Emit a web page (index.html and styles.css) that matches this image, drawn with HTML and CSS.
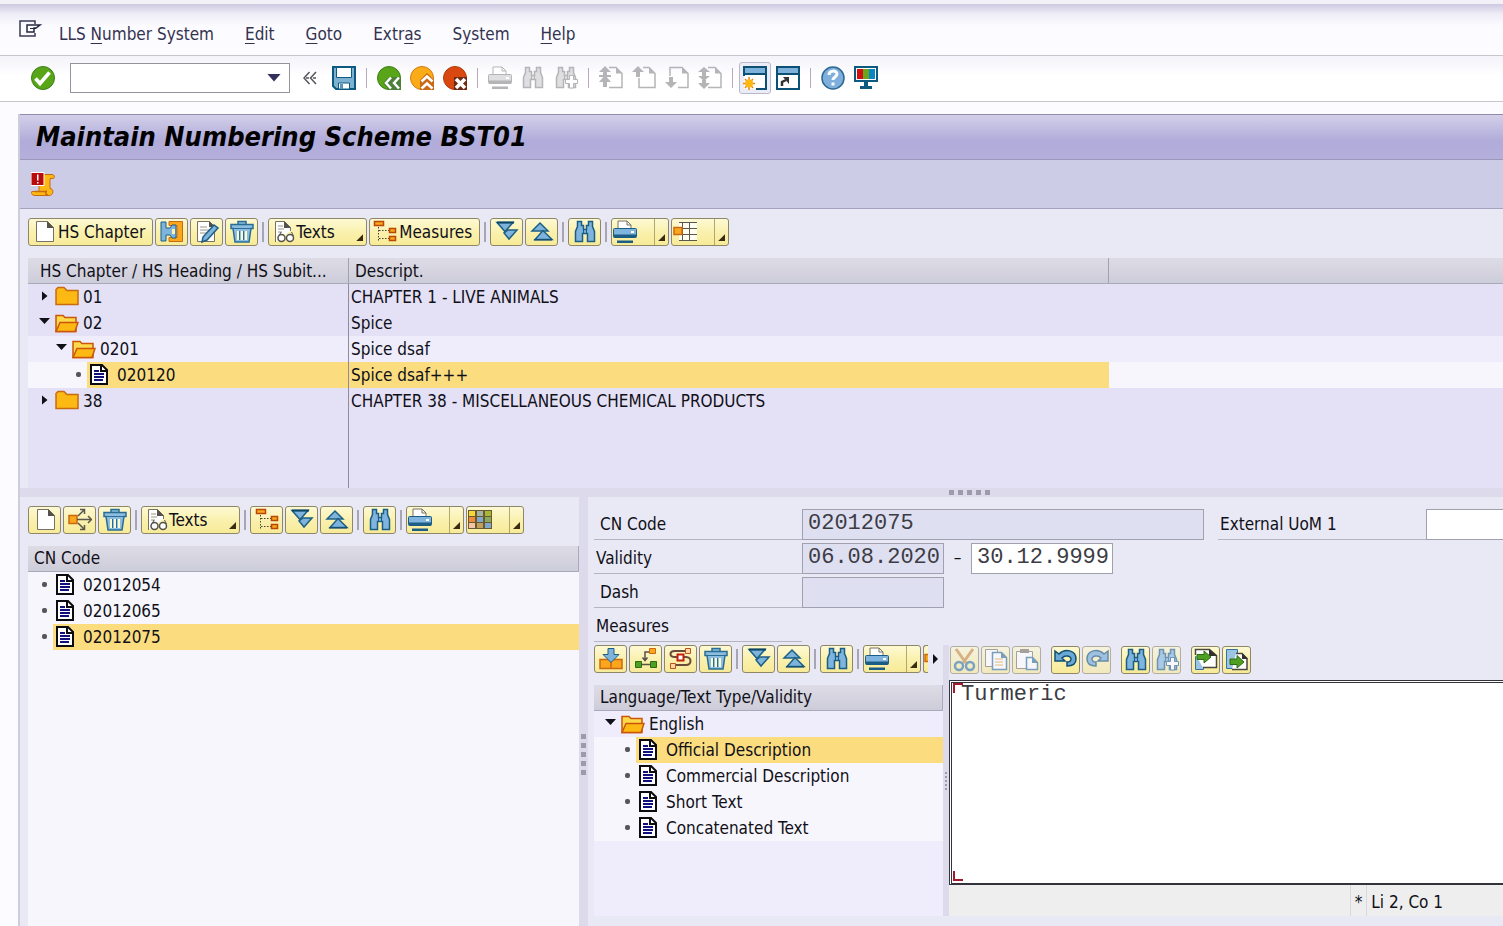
FILE: index.html
```html
<!DOCTYPE html>
<html lang="en">
<head>
    <meta charset="UTF-8">
    <meta name="viewport" content="width=device-width, initial-scale=1.0">
    <title>Maintain Numbering Scheme BST01</title>
    <link rel="stylesheet" href="styles.css">
</head>
<body>

    <!-- Icon sprite -->
    <svg class="sprite" aria-hidden="true">
        <symbol id="i-menu" viewBox="0 0 24 18">
            <path d="M16 4V1H1v15h15v-3" fill="none" stroke="#3a3a55" stroke-width="1.5"/>
            <path d="M8 5h13l-4 3h-2v4H8z" fill="#fff" stroke="#25253f" stroke-width="1.500"/>
            <path d="M11 8.500h6" stroke="#25253f"/>
        </symbol>
        <symbol id="i-ok" viewBox="0 0 24 24">
            <circle cx="12" cy="12" r="11.5" fill="#58a618" stroke="#3c7d1a"/>
            <path d="M4.500 12.500l4.500 5L18.500 6.500" fill="none" stroke="#fff" stroke-width="3.600"/>
        </symbol>
        <symbol id="i-hide" viewBox="0 0 14 14">
            <path d="M6.500 1L1 7l5.500 6M13 1L7.500 7l5.500 6M3 7h3M10 7h3" fill="none" stroke="#55555c" stroke-width="1.500"/>
        </symbol>
        <symbol id="i-save" viewBox="0 0 24 24">
            <path d="M1 1h22v22H4l-3-3z" fill="#7eb0d2" stroke="#0d5a80" stroke-width="2"/>
            <path d="M4.500 1.500h15v10h-15z" fill="#fff" stroke="#0d5a80"/>
            <path d="M6.500 17h11v6h-11z" fill="#fff" stroke="#0d5a80"/>
            <path d="M8 18h3v5H8z" fill="#5c93b8"/>
        </symbol>
        <symbol id="i-back" viewBox="0 0 24 24">
            <circle cx="12" cy="12" r="11.500" fill="#58a618" stroke="#3c7d1a"/>
            <path d="M6 17l6-6h12v13H12z" fill="#4b7f3b"/>
            <path d="M14 11.500l-5 5.500 5 5.500M22 11.500l-5 5.500 5 5.500" fill="none" stroke="#fff" stroke-width="2.500"/>
        </symbol>
        <symbol id="i-exit" viewBox="0 0 24 24">
            <circle cx="12" cy="12" r="11.500" fill="#fbab18" stroke="#d47a10"/>
            <path d="M10 14l7-7 7 7v10H10z" fill="#c96a14"/>
            <path d="M11.500 15.500l5.500-5 5.500 5M11.500 22.500l5.500-5 5.500 5" fill="none" stroke="#fff" stroke-width="2.600"/>
        </symbol>
        <symbol id="i-cancel" viewBox="0 0 24 24">
            <circle cx="12" cy="12" r="11.500" fill="#d9490f" stroke="#b23a0d"/>
            <path d="M11 11h13v13H11z" fill="#6f2a14"/>
            <path d="M13 13l9 9M22 13l-9 9" stroke="#fff" stroke-width="3.600"/>
        </symbol>
        <symbol id="i-print" viewBox="0 0 24 24">
            <path d="M5 9V1h9l4 4v4" fill="#fff" stroke="var(--dim)"/>
            <path d="M14 1v4h4" fill="none" stroke="var(--dim)"/>
            <rect x=".5" y="8.500" width="23" height="9" rx="1" fill="var(--fill)" stroke="var(--line)"/>
            <path d="M1 14.500h22v3H1zM4 20.500h16v2.500H4z" fill="var(--line)"/>
            <path d="M18 11h3v2h-3z" fill="#fff"/>
        </symbol>
        <symbol id="i-find" viewBox="0 0 24 24">
            <path d="M4.500 1.500h4v4h2v4h3v-4h2v-4h4v5l2 5v10h-7v-8h-5v8h-7v-10l2-5z" fill="var(--fill)" stroke="var(--line)" stroke-width="1.500"/>
            <path d="M10.500 6v8M13.500 6v8" stroke="var(--line)"/>
        </symbol>
        <symbol id="i-find-next" viewBox="0 0 24 24">
            <use href="#i-find"/>
            <path d="M15.500 9.500h4v4h4v4h-4v4.500h-4v-4.500h-4v-4h4z" fill="#fff" stroke="var(--line)"/>
        </symbol>
        <symbol id="i-page" viewBox="0 0 24 24">
            <path d="M10 1.500h7l6 6v14H10" fill="none" stroke="var(--line)" stroke-width="1.500"/>
            <path d="M17 1l6 6.500h-6z" fill="var(--line)"/>
        </symbol>
        <symbol id="i-first" viewBox="0 0 24 24">
            <use href="#i-page"/>
            <path d="M6 0l6 6H8v3h4v2H0V9h4V6H0zM6 9l6 7H8v5H4v-5H0z" fill="var(--line)"/>
        </symbol>
        <symbol id="i-prev" viewBox="0 0 24 24">
            <path d="M7 12v9.500h16v-14l-6-6h-6" fill="none" stroke="var(--line)" stroke-width="1.500"/>
            <path d="M17 1l6 6.500h-6zM6 0l6 6H8v5H4V6H0z" fill="var(--line)"/>
        </symbol>
        <symbol id="i-next" viewBox="0 0 24 24">
            <path d="M5 10V1.500h12l6 6v14H13" fill="none" stroke="var(--line)" stroke-width="1.500"/>
            <path d="M17 1l6 6.500h-6zM4 11h4v5h4l-6 6-6-6h4z" fill="var(--line)"/>
        </symbol>
        <symbol id="i-last" viewBox="0 0 24 24">
            <use href="#i-page"/>
            <path d="M6 1l6 5H8v4h4l-6 5-6-5h4V6H0zM4 14h4v3h4l-6 6-6-6h4z" fill="var(--line)"/>
        </symbol>
        <symbol id="i-session" viewBox="0 0 24 24">
            <path d="M1 7h22v16H1z" fill="#fff"/>
            <path d="M1 10V1h22v22H13" fill="none" stroke="#0d5076" stroke-width="2"/>
            <path d="M2 2h20v5H2z" fill="#7fb2db"/><path d="M1 8h22" stroke="#0d5076" stroke-width="2"/>
            <path d="M6 11v13M0 17.500h12M2 13l8 9M10 13l-8 9" stroke="#e8860c" stroke-width="1.500"/>
            <circle cx="6" cy="17.500" r="4" fill="#fdb813"/>
        </symbol>
        <symbol id="i-shortcut" viewBox="0 0 24 24">
            <path d="M1 1h22v22H1z" fill="#fff" stroke="#0d5076" stroke-width="2"/>
            <path d="M2 2h20v5H2z" fill="#7fb2db"/><path d="M1 8h22" stroke="#0d5076" stroke-width="2"/>
            <path d="M6 20v-4l4-2" fill="none" stroke="#333" stroke-width="2.500"/><path d="M7 11h6v7z" fill="#333"/>
        </symbol>
        <symbol id="i-help" viewBox="0 0 24 24">
            <circle cx="12" cy="12" r="11" fill="#7fb0dc" stroke="#2d6793" stroke-width="1.500"/>
            <path d="M8 9c0-5 8-5 8-1 0 3-4 3-4 6" fill="none" stroke="#fff" stroke-width="3"/>
            <path d="M10.500 16.500h3v3h-3z" fill="#fff"/>
        </symbol>
        <symbol id="i-monitor" viewBox="0 0 24 24">
            <path d="M1 1h22v14H1z" fill="#fff" stroke="#0d5a80" stroke-width="2"/>
            <path d="M3 3h6v10H3z" fill="#d01010"/><path d="M9 3h6v10H9z" fill="#6aa51c"/><path d="M15 3h6v10h-6z" fill="#0b86c4"/>
            <path d="M10 16h4v4h4v3H6v-3h4z" fill="#0d5a80"/>
        </symbol>
        <symbol id="i-scroll" viewBox="0 0 24 24">
            <path d="M8 2.500h13c3 0 3 4 1 4h-3v10c4 0 4 7-1 7H4c-4 0-4-4-3-4h7z" fill="#fdb813" stroke="#c96a10"/>
            <path d="M4 19.500h12M17 23c-3 0-3-4-1-4" fill="none" stroke="#c96a10" stroke-width="1.500"/>
            <path d="M0 .5h13v13H0z" fill="#b80c0c" stroke="#fff"/>
            <path d="M6 2.500h1.500v6H6zM6 10h1.500v1.500H6z" fill="#fff"/>
        </symbol>
        <symbol id="i-new" viewBox="0 0 24 24">
            <path d="M4.500 1.500h11l6 6v14h-17z" fill="#fff" stroke="#777164"/>
            <path d="M15 1l7 7h-7z" fill="#55524b"/>
        </symbol>
        <symbol id="i-insert" viewBox="0 0 24 24">
            <path d="M9 1.500h13.500v20H9v-4h8v-12H9z" fill="#fba61c" stroke="#c96a10"/>
            <path d="M1 2h5v6h4l2-3h4v13h-4l-2-3H6v6H1z" fill="#7eb3dc" stroke="#1d5f85"/>
            <path d="M12 9h3v5h-3z" fill="#fdf3b0"/>
        </symbol>
        <symbol id="i-edit" viewBox="0 0 24 24">
            <path d="M2.500 1.500h12l5 5v15h-17z" fill="#fff" stroke="#777164"/>
            <path d="M14 1l6 6h-6z" fill="#55524b"/>
            <path d="M5 7h7M5 10h9M5 13h6" stroke="#9a9688"/>
            <path d="M7 22l1-5L19 5l4 3-11 12z" fill="#7eb3dc" stroke="#1d5f85" stroke-width="1.500"/>
        </symbol>
        <symbol id="i-trash" viewBox="0 0 24 24">
            <path d="M8 4V1.500h8V4M1 4.500h22v4h-2L19 22H5L3 8.500H1z" fill="#8dbde0" stroke="#2a6d93" stroke-width="1.500"/>
            <path d="M2 8.500h20" stroke="#2a6d93"/>
            <path d="M8 11v9M12 11v9M16 11v9" stroke="#fdf9d0" stroke-width="2"/>
            <path d="M9.500 11v9M13.500 11v9" stroke="#2a6d93"/>
        </symbol>
        <symbol id="i-texts" viewBox="0 0 24 24">
            <path d="M3.500 22V1.500h9l6 6V11" fill="#fff" stroke="#777164"/>
            <path d="M12 1l7 7h-7z" fill="#55524b"/>
            <path d="M6 6h5M6 9h6M6 12h4" stroke="#9a9688"/>
            <path d="M7 16l2-4M21.500 16l-2-4" stroke="#55524b"/>
            <circle cx="9.500" cy="18" r="3.500" fill="#fff" stroke="#55524b" stroke-width="1.500"/>
            <circle cx="18" cy="18" r="3.500" fill="#fff" stroke="#55524b" stroke-width="1.500"/>
        </symbol>
        <symbol id="i-tree" viewBox="0 0 24 24">
            <path d="M5.500 7v15M6 10.500h10M6 18.500h10" stroke="#4c4230" stroke-dasharray="1.500 1.500" fill="none"/>
            <path d="M1.500 1.500h9v4h-9zM16.500 8.500h6v4h-6zM16.500 16.500h6v4h-6z" fill="#fba61c" stroke="#b9470a" stroke-width="1.500"/>
        </symbol>
        <symbol id="i-expand" viewBox="0 0 24 24">
            <path d="M13 10h9l-8 9-5-6z" fill="#7eb3dc" stroke="#1d5f85" stroke-width="1.500"/>
            <path d="M2 2.500h16l-8 9z" fill="#7eb3dc" stroke="#1d5f85" stroke-width="1.500"/>
            <path d="M2 2.500h17" stroke="#0d4566" stroke-width="2"/>
        </symbol>
        <symbol id="i-collapse" viewBox="0 0 24 24">
            <path d="M2 11l8-8 8 8z" fill="#7eb3dc" stroke="#1d5f85" stroke-width="1.500"/>
            <path d="M5 19.500l8-9 9 9z" fill="#7eb3dc" stroke="#1d5f85" stroke-width="1.500"/>
            <path d="M4 20h18" stroke="#0d4566"/>
        </symbol>
        <symbol id="i-grid" viewBox="0 0 24 24">
            <path d="M6 2h18v19H6z" fill="#fffdf0"/>
            <path d="M6 2.500h18M6 8.500h18M6 14.500h18M6 20.500h18M9.500 2v19M16.500 2v19" stroke="#5a574e" fill="none"/>
            <path d="M1 7.500h8v7H1z" fill="#fba61c" stroke="#c96a10" stroke-width="1.500"/>
        </symbol>
        <symbol id="i-colors" viewBox="0 0 24 24">
            <path d="M0 2h24v19H0z" fill="#6a5a2c"/>
            <path d="M1 3h6v5H1z" fill="#f5d63d"/><path d="M9 3h6v5H9z" fill="#a3b3a8"/><path d="M17 3h6v5h-6z" fill="#a8b73a"/>
            <path d="M1 9h6v5H1z" fill="#f08a3c"/><path d="M9 9h6v5H9z" fill="#7fa8d0"/><path d="M17 9h6v5h-6z" fill="#89a860"/>
            <path d="M1 15h6v5H1z" fill="#f5c4a8"/><path d="M9 15h6v5H9z" fill="#c0a060"/><path d="M17 15h6v5h-6z" fill="#7fa8d0"/>
        </symbol>
        <symbol id="i-spread" viewBox="0 0 24 24">
            <path d="M1 7.500h8v8H1z" fill="#fba61c" stroke="#c96a10" stroke-width="1.500"/>
            <path d="M9 11.500h14M20 8l3.500 3.500L20 15M10 8l6-6M12 1.500h4.500V6M10 15l6 6M12 21.500h4.500V17" fill="none" stroke="#5a574e" stroke-width="1.500"/>
        </symbol>
        <symbol id="i-load" viewBox="0 0 24 24">
            <path d="M1 12.500h22v9H1zM12 12v9" fill="#fba61c" stroke="#c96a10" stroke-width="1.500"/>
            <path d="M9 1.500h6v6h5l-8 8-8-8h5z" fill="#7eb3dc" stroke="#1d5f85"/>
        </symbol>
        <symbol id="i-branch" viewBox="0 0 24 24">
            <path d="M15 5h-4v8M8.500 10.500l2.500 3 2.500-3M8 17.500h8" fill="none" stroke="#55524b" stroke-width="1.500"/>
            <path d="M15.500 1.500h6v5h-6z" fill="#fba61c" stroke="#c96a10"/>
            <path d="M1.500 14.500h6v6h-6zM16.500 14.500h6v6h-6z" fill="#4da022" stroke="#2f6a14"/>
        </symbol>
        <symbol id="i-flow" viewBox="0 0 24 24">
            <path d="M17 4H6c-6 0-6 6 0 6h11c6 0 6 8 0 8H7" fill="none" stroke="#6a4a3a" stroke-width="2"/>
            <path d="M8.500 7.500h6v6h-6z" fill="#fff" stroke="#c0200c" stroke-width="2"/>
            <path d="M16.500 1.500h5v5h-5zM1.500 16.500h5v5h-5z" fill="#fdd8a0" stroke="#c0501c"/>
        </symbol>
        <symbol id="i-cut" viewBox="0 0 24 24">
            <path d="M3 1l10 14M20 1L10 15" stroke="#c98d3c" stroke-width="3"/>
            <circle cx="6" cy="18" r="4" fill="none" stroke="#33749f" stroke-width="2.500"/>
            <circle cx="17" cy="18" r="4" fill="none" stroke="#33749f" stroke-width="2.500"/>
        </symbol>
        <symbol id="i-copy" viewBox="0 0 24 24">
            <path d="M1.500 1.500h12v17h-12z" fill="#fff" stroke="#777164"/>
            <path d="M8.500 4.500h9l5 5v12h-14z" fill="#fff" stroke="#2f6d95" stroke-width="1.500"/>
            <path d="M17 4l6 6h-6z" fill="#2f6d95"/><path d="M11 11h8M11 14h8M11 17h8" stroke="#e0a030"/>
        </symbol>
        <symbol id="i-paste" viewBox="0 0 24 24">
            <path d="M1.500 3.500h16v17h-16z" fill="#fff" stroke="#777164"/><path d="M5 1h9v4H5z" fill="#777164"/>
            <path d="M11.500 9.500h6l5 5v7h-11z" fill="#fff" stroke="#2f6d95" stroke-width="1.500"/>
            <path d="M17 9l6 6h-6z" fill="#2f6d95"/>
        </symbol>
        <symbol id="i-undo" viewBox="0 0 24 24">
            <path d="M1 3l4 3c6-6 17-4 17 5 0 5-4 7-9 7v-4c6 0 5-7-1-6-2 0-3 1-4 2l3 3H1z" fill="#6ba8d6" stroke="#114f74" stroke-width="1.500"/>
        </symbol>
        <symbol id="i-import" viewBox="0 0 24 24">
            <path d="M1.500 8.500h8v13h-8z" fill="#9cc4e4" stroke="#33749f"/>
            <path d="M1.500 7V1.500h14l7 6v12H9" fill="#fff" stroke="#4a473e" stroke-width="1.500"/><path d="M15 1l8 7h-8z" fill="#33312b"/>
            <path d="M3 6.500h7V3l7 6-7 6v-3.500H3z" fill="#4da022" stroke="#2f6a14"/>
        </symbol>
        <symbol id="i-export" viewBox="0 0 24 24">
            <path d="M1.500 1.500h11v19h-11z" fill="#9cc4e4" stroke="#33749f"/>
            <path d="M11 5.500h6l5 5v11H7" fill="#fff" stroke="#4a473e" stroke-width="1.500"/><path d="M17 5l6 6h-6z" fill="#33312b"/>
            <path d="M5 11h7V7.500l7 6.500-7 6v-3.500H5z" fill="#4da022" stroke="#2f6a14"/>
        </symbol>
        <symbol id="i-folder" viewBox="0 0 24 24">
            <path d="M1 19.500V4.500l2-2h6l3 3h11v14z" fill="#fdb913" stroke="#c96a10" stroke-width="1.500"/>
        </symbol>
        <symbol id="i-folder-open" viewBox="0 0 24 24">
            <path d="M1 20.500V4.500h7l2 2h11v14z" fill="#fdd94c" stroke="#c9560a" stroke-width="1.500"/>
            <path d="M1 20.500l4-9h18l-3 9z" fill="#fdb913" stroke="#c9560a" stroke-width="1.500"/>
        </symbol>
        <symbol id="i-doc" viewBox="0 0 24 24">
            <path d="M2 2h11l5 5v14H2z" fill="#fff" stroke="#0c0c10" stroke-width="2"/>
            <path d="M12 2v6h6" fill="none" stroke="#0c0c10" stroke-width="2"/>
            <path d="M5 8h5M5 11h10M5 14h10M5 17h9" stroke="#10107c" stroke-width="2"/>
        </symbol>
    </svg>

    <nav class="menubar">
        <button class="menu-icon" aria-label="Window menu"><svg width="24" height="18"><use href="#i-menu"/></svg></button>
        <button>LLS <u>N</u>umber System</button>
        <button><u>E</u>dit</button>
        <button><u>G</u>oto</button>
        <button>Extr<u>a</u>s</button>
        <button>S<u>y</u>stem</button>
        <button><u>H</u>elp</button>
    </nav>

    <div class="std-toolbar">
        <button aria-label="Enter"><svg class="icon"><use href="#i-ok"/></svg></button>
        <div class="command">
            <input type="text" aria-label="Command">
            <button aria-label="Command history"></button>
        </div>
        <button class="chevrons" aria-label="Hide command field"><svg width="14" height="14"><use href="#i-hide"/></svg></button>
        <button aria-label="Save"><svg class="icon"><use href="#i-save"/></svg></button>
        <span class="line"></span>
        <button aria-label="Back"><svg class="icon"><use href="#i-back"/></svg></button>
        <button aria-label="Exit"><svg class="icon"><use href="#i-exit"/></svg></button>
        <button aria-label="Cancel"><svg class="icon"><use href="#i-cancel"/></svg></button>
        <span class="line"></span>
        <button disabled aria-label="Print"><svg class="icon"><use href="#i-print"/></svg></button>
        <button disabled aria-label="Find"><svg class="icon"><use href="#i-find"/></svg></button>
        <button disabled aria-label="Find next"><svg class="icon"><use href="#i-find-next"/></svg></button>
        <span class="line"></span>
        <button disabled aria-label="First page"><svg class="icon"><use href="#i-first"/></svg></button>
        <button disabled aria-label="Previous page"><svg class="icon"><use href="#i-prev"/></svg></button>
        <button disabled aria-label="Next page"><svg class="icon"><use href="#i-next"/></svg></button>
        <button disabled aria-label="Last page"><svg class="icon"><use href="#i-last"/></svg></button>
        <span class="line"></span>
        <button class="active" aria-label="New session"><svg class="icon"><use href="#i-session"/></svg></button>
        <button aria-label="Create shortcut"><svg class="icon"><use href="#i-shortcut"/></svg></button>
        <span class="line"></span>
        <button aria-label="Help"><svg class="icon"><use href="#i-help"/></svg></button>
        <button aria-label="Customize layout"><svg class="icon"><use href="#i-monitor"/></svg></button>
    </div>

    <main class="window">
        <h1 class="title">Maintain Numbering Scheme BST01</h1>
        <div class="app-toolbar">
            <button aria-label="Information"><svg class="icon"><use href="#i-scroll"/></svg></button>
        </div>

        <section class="top-pane">
            <div class="toolbar">
                <button class="btn text"><svg class="icon"><use href="#i-new"/></svg><span>HS Chapter</span></button>
                <button class="btn" aria-label="Insert"><svg class="icon"><use href="#i-insert"/></svg></button>
                <button class="btn" aria-label="Edit"><svg class="icon"><use href="#i-edit"/></svg></button>
                <button class="btn" aria-label="Delete"><svg class="icon"><use href="#i-trash"/></svg></button>
                <span class="sep"></span>
                <button class="btn text drop"><svg class="icon"><use href="#i-texts"/></svg><span>Texts</span></button>
                <button class="btn text"><svg class="icon"><use href="#i-tree"/></svg><span>Measures</span></button>
                <span class="sep"></span>
                <button class="btn" aria-label="Expand"><svg class="icon"><use href="#i-expand"/></svg></button>
                <button class="btn" aria-label="Collapse"><svg class="icon"><use href="#i-collapse"/></svg></button>
                <span class="sep"></span>
                <button class="btn" aria-label="Find"><svg class="icon"><use href="#i-find"/></svg></button>
                <span class="sep"></span>
                <button class="btn drop split" aria-label="Print"><svg class="icon"><use href="#i-print"/></svg></button>
                <button class="btn drop split" aria-label="Layout"><svg class="icon"><use href="#i-grid"/></svg></button>
            </div>

            <table class="grid">
                <colgroup><col class="col-tree"><col class="col-text"><col></colgroup>
                <thead>
                    <tr><th>HS Chapter / HS Heading / HS Subit...</th><th>Descript.</th><th></th></tr>
                </thead>
                <tbody>
                    <tr>
                        <td><div class="node"><span class="mark closed"></span><span class="item"><svg class="icon"><use href="#i-folder"/></svg>01</span></div></td>
                        <td>CHAPTER 1 - LIVE ANIMALS</td><td></td>
                    </tr>
                    <tr>
                        <td><div class="node"><span class="mark open"></span><span class="item"><svg class="icon"><use href="#i-folder-open"/></svg>02</span></div></td>
                        <td>Spice</td><td></td>
                    </tr>
                    <tr class="level-1">
                        <td><div class="node"><span class="mark open"></span><span class="item"><svg class="icon"><use href="#i-folder-open"/></svg>0201</span></div></td>
                        <td>Spice dsaf</td><td></td>
                    </tr>
                    <tr class="level-2 selected">
                        <td><div class="node"><span class="mark leaf"></span><span class="item"><svg class="icon"><use href="#i-doc"/></svg>020120</span></div></td>
                        <td>Spice dsaf+++</td><td></td>
                    </tr>
                    <tr>
                        <td><div class="node"><span class="mark closed"></span><span class="item"><svg class="icon"><use href="#i-folder"/></svg>38</span></div></td>
                        <td>CHAPTER 38 - MISCELLANEOUS CHEMICAL PRODUCTS</td><td></td>
                    </tr>
                    <tr class="filler"><td></td><td></td><td></td></tr>
                </tbody>
            </table>
        </section>

        <div class="splitter-h"><i></i><i></i><i></i><i></i><i></i></div>

        <div class="bottom">
            <section class="codes">
                <div class="toolbar">
                    <button class="btn" aria-label="Create"><svg class="icon"><use href="#i-new"/></svg></button>
                    <button class="btn" aria-label="Distribute"><svg class="icon"><use href="#i-spread"/></svg></button>
                    <button class="btn" aria-label="Delete"><svg class="icon"><use href="#i-trash"/></svg></button>
                    <span class="sep"></span>
                    <button class="btn text drop"><svg class="icon"><use href="#i-texts"/></svg><span>Texts</span></button>
                    <span class="sep"></span>
                    <button class="btn" aria-label="Measures"><svg class="icon"><use href="#i-tree"/></svg></button>
                    <button class="btn" aria-label="Expand"><svg class="icon"><use href="#i-expand"/></svg></button>
                    <button class="btn" aria-label="Collapse"><svg class="icon"><use href="#i-collapse"/></svg></button>
                    <span class="sep"></span>
                    <button class="btn" aria-label="Find"><svg class="icon"><use href="#i-find"/></svg></button>
                    <span class="sep"></span>
                    <button class="btn drop split" aria-label="Print"><svg class="icon"><use href="#i-print"/></svg></button>
                    <button class="btn drop split" aria-label="Views"><svg class="icon"><use href="#i-colors"/></svg></button>
                </div>
                <h2 class="head">CN Code</h2>
                <ul class="tree">
                    <li class="node"><span class="mark leaf"></span><span class="item"><svg class="icon"><use href="#i-doc"/></svg>02012054</span></li>
                    <li class="node"><span class="mark leaf"></span><span class="item"><svg class="icon"><use href="#i-doc"/></svg>02012065</span></li>
                    <li class="node selected"><span class="mark leaf"></span><span class="item"><svg class="icon"><use href="#i-doc"/></svg>02012075</span></li>
                </ul>
            </section>

            <div class="splitter-v"><i></i><i></i><i></i><i></i><i></i></div>

            <section class="detail">
                <form class="fields">
                    <div class="row">
                        <label class="inset" for="cn-code">CN Code</label>
                        <input class="long" id="cn-code" type="text" value="02012075" readonly>
                        <label class="inset uom" for="uom">External UoM 1</label>
                        <input class="rest" id="uom" type="text">
                    </div>
                    <div class="row">
                        <label for="valid-from">Validity</label>
                        <input class="date" id="valid-from" type="text" value="06.08.2020" readonly>
                        <span class="dash">–</span>
                        <input class="date" type="text" value="30.12.9999" aria-label="Valid to">
                    </div>
                    <div class="row">
                        <label class="inset" for="dash">Dash</label>
                        <input class="date" id="dash" type="text" readonly>
                    </div>
                    <div class="row"><span class="caption">Measures</span></div>
                </form>

                <div class="texts">
                    <div class="languages">
                        <div class="toolbar">
                            <button class="btn" aria-label="Load"><svg class="icon"><use href="#i-load"/></svg></button>
                            <button class="btn" aria-label="Branch"><svg class="icon"><use href="#i-branch"/></svg></button>
                            <button class="btn" aria-label="Flow"><svg class="icon"><use href="#i-flow"/></svg></button>
                            <button class="btn" aria-label="Delete"><svg class="icon"><use href="#i-trash"/></svg></button>
                            <span class="sep"></span>
                            <button class="btn" aria-label="Expand"><svg class="icon"><use href="#i-expand"/></svg></button>
                            <button class="btn" aria-label="Collapse"><svg class="icon"><use href="#i-collapse"/></svg></button>
                            <span class="sep"></span>
                            <button class="btn" aria-label="Find"><svg class="icon"><use href="#i-find"/></svg></button>
                            <span class="sep"></span>
                            <button class="btn drop split" aria-label="Print"><svg class="icon"><use href="#i-print"/></svg></button>
                            <button class="btn clipped" aria-label="Layout"><svg class="icon"><use href="#i-grid"/></svg></button>
                            <button class="more" aria-label="More"></button>
                        </div>
                        <h2 class="head">Language/Text Type/Validity</h2>
                        <ul class="tree">
                            <li class="node"><span class="mark open"></span><span class="item"><svg class="icon"><use href="#i-folder-open"/></svg>English</span></li>
                            <li class="node level-1 selected"><span class="mark leaf"></span><span class="item"><svg class="icon"><use href="#i-doc"/></svg>Official Description</span></li>
                            <li class="node level-1"><span class="mark leaf"></span><span class="item"><svg class="icon"><use href="#i-doc"/></svg>Commercial Description</span></li>
                            <li class="node level-1"><span class="mark leaf"></span><span class="item"><svg class="icon"><use href="#i-doc"/></svg>Short Text</span></li>
                            <li class="node level-1"><span class="mark leaf"></span><span class="item"><svg class="icon"><use href="#i-doc"/></svg>Concatenated Text</span></li>
                        </ul>
                    </div>

                    <div class="splitter-s"><i></i><i></i><i></i><i></i><i></i></div>

                    <div class="editor">
                        <div class="edit-toolbar">
                            <div>
                                <button class="btn" disabled aria-label="Cut"><svg class="icon"><use href="#i-cut"/></svg></button>
                                <button class="btn" disabled aria-label="Copy"><svg class="icon"><use href="#i-copy"/></svg></button>
                                <button class="btn" disabled aria-label="Paste"><svg class="icon"><use href="#i-paste"/></svg></button>
                            </div>
                            <div>
                                <button class="btn" aria-label="Undo"><svg class="icon"><use href="#i-undo"/></svg></button>
                                <button class="btn" disabled aria-label="Redo"><svg class="icon flip"><use href="#i-undo"/></svg></button>
                            </div>
                            <div>
                                <button class="btn" aria-label="Find"><svg class="icon"><use href="#i-find"/></svg></button>
                                <button class="btn" disabled aria-label="Find next"><svg class="icon"><use href="#i-find-next"/></svg></button>
                            </div>
                            <div>
                                <button class="btn" aria-label="Load file"><svg class="icon"><use href="#i-import"/></svg></button>
                                <button class="btn" aria-label="Save file"><svg class="icon"><use href="#i-export"/></svg></button>
                            </div>
                        </div>
                        <div class="text-area">
                            <textarea aria-label="Text" spellcheck="false">Turmeric</textarea>
                        </div>
                        <div class="status"><span>*</span><span>Li 2, Co 1</span></div>
                    </div>
                </div>
            </section>
        </div>
    </main>

</body>
</html>
```
FILE: styles.css
```css
:root {
    --line: #1b5d84;
    --fill: #7fb4de;
    --dim: #777164;
    --select: #fbdd80;
    --panel: #e9e9f5;
    --bar: #dddaec;
    --border: #a9a9bb;
    --ui: "DejaVu Sans Condensed", "DejaVu Sans", sans-serif;
    --mono: "Liberation Mono", monospace;
}

* {
    box-sizing: border-box;
}

body {
    margin: 0;
    min-height: 100vh;
    display: flex;
    flex-direction: column;
    overflow: hidden;
    background: #fcfbff;
    font-family: var(--ui);
    font-size: 17px;
    color: #101018;
}

button {
    flex: none;
    margin: 0;
    padding: 0;
    border: none;
    background: none;
    font: inherit;
    color: inherit;
}

.sprite {
    position: absolute;
    width: 0;
    height: 0;
}

.icon {
    display: block;
    flex: none;
    width: 24px;
    height: 24px;
}

.flip {
    transform: scaleX(-1);
}

/* Menu bar */
.menubar {
    display: flex;
    align-items: center;
    gap: 31px;
    height: 56px;
    padding: 8px 19px 0;
    border-top: 4px solid #f2f1f8;
    border-bottom: 1px solid #c6c5cc;
    background: linear-gradient(#cdcae1, #eeedf7 10px, #fcfbff 22px);
    color: #33334f;
}

.menu-icon {
    align-self: flex-start;
    margin-top: 8px;
    margin-right: -15px;
}

.menubar u {
    text-underline-offset: 3px;
}

/* Standard toolbar */
.std-toolbar {
    display: flex;
    align-items: center;
    gap: 9px;
    height: 46px;
    padding: 0 31px 2px;
    border-bottom: 1px solid #c6c5cc;
    background: linear-gradient(#f4f3fa, #fff 20px);
}

.std-toolbar button:disabled {
    --line: #b5b5b8;
    --fill: #dfdfe1;
    --dim: #b5b5b8;
}

.std-toolbar .active {
    margin: 0 -4px;
    padding: 3px;
    border: 1px solid #b9b9cc;
    border-radius: 3px;
    background: #ececf6;
}

.line {
    width: 3px;
    height: 20px;
    border-left: 1px solid #b9a9bd;
    margin-left: 1px;
    margin-right: -1px;
}

.command {
    display: flex;
    align-items: center;
    width: 220px;
    height: 30px;
    margin-left: 6px;
    margin-right: 4px;
    border: 1px solid #94949e;
    background: #fff;
}

.command input {
    flex: 1;
    min-width: 0;
    height: 100%;
    border: none;
    outline: none;
    background: none;
    font: inherit;
}

.command button {
    width: 14px;
    height: 8px;
    margin-right: 8px;
    background: #33315c;
    clip-path: polygon(0 0, 100% 0, 50% 100%);
}

.chevrons {
    width: 14px;
    margin-right: 6px;
}

.chevrons svg {
    display: block;
}

/* Window */
.window {
    flex: 1;
    display: flex;
    flex-direction: column;
    margin-top: 12px;
    margin-left: 18px;
    border-left: 2px solid #cfcddd;
    background: var(--panel);
}

.title {
    height: 46px;
    margin: 0;
    padding-left: 16px;
    border-top: 1px solid #8f8cab;
    border-bottom: 1px solid #9a97b8;
    background: linear-gradient(#d3cfe9, #b0abd9 60%, #b4afdb);
    font-size: 27px;
    font-style: italic;
    line-height: 44px;
    color: #000;
}

.app-toolbar {
    display: flex;
    align-items: center;
    height: 49px;
    padding-left: 11px;
    border-bottom: 1px solid #a5a3bd;
    background: #cdcce7;
}

/* Yellow push buttons */
.toolbar {
    display: flex;
    gap: 2px;
}

.btn {
    display: flex;
    align-items: center;
    justify-content: center;
    width: 33px;
    height: 28px;
    border: 1px solid #8d8767;
    border-radius: 3px;
    background: linear-gradient(#fdf9d4, #faf1ae 50%, #f7ea98);
}

.btn.text {
    width: auto;
    padding: 0 7px 0 3px;
    gap: 2px;
}

.drop {
    position: relative;
}

.btn.text.drop {
    justify-content: flex-start;
    width: 99px;
    gap: 0;
}

.btn.split {
    justify-content: flex-start;
    width: 58px;
    padding-left: 1px;
}

.drop::after {
    content: "";
    position: absolute;
    right: 3px;
    bottom: 4px;
    width: 7px;
    height: 7px;
    background: #3a2c12;
    clip-path: polygon(100% 0, 100% 100%, 0 100%);
}

.split::before {
    content: "";
    position: absolute;
    right: 13px;
    top: 0;
    bottom: 0;
    border-left: 1px solid #b0a86f;
}

.sep {
    flex: none;
    width: 6px;
    height: 20px;
    margin-top: 4px;
    background: linear-gradient(90deg, transparent 2px, #a7a5b3 2px, #a7a5b3 4px, transparent 4px);
}

/* Tree pieces */
.node {
    display: flex;
    height: 26px;
    padding-left: 8px;
}

.level-1.node,
.level-1 .node {
    padding-left: 25px;
}

.level-2 .node {
    padding-left: 42px;
}

.mark {
    display: flex;
    align-items: center;
    justify-content: center;
    width: 17px;
}

.mark::before {
    content: "";
    background: #101018;
}

.closed::before {
    width: 6px;
    height: 10px;
    margin-bottom: 2px;
    clip-path: polygon(0 0, 100% 50%, 0 100%);
}

.open::before {
    width: 11px;
    height: 6px;
    margin-bottom: 4px;
    clip-path: polygon(0 0, 100% 0, 50% 100%);
}

.leaf::before {
    width: 5px;
    height: 5px;
    margin-bottom: 2px;
    border-radius: 2px;
    background: #55555c;
}

.item {
    flex: 1;
    display: flex;
    align-items: center;
    gap: 4px;
    padding-left: 2px;
}

.selected .item {
    background: var(--select);
}

/* Chapter table */
.top-pane {
    height: 279px;
    padding: 9px 0 0 8px;
}

.grid {
    width: 100%;
    margin-top: 12px;
    border-spacing: 0;
    table-layout: fixed;
}

.col-tree {
    width: 321px;
}

.col-text {
    width: 760px;
}

.grid th {
    height: 26px;
    padding: 0 0 0 6px;
    border-right: 1px solid #a2a1b2;
    border-bottom: 1px solid var(--border);
    background: linear-gradient(#dddce6, #cdccd9);
    font-weight: normal;
    text-align: left;
    white-space: nowrap;
}

.grid th:first-child {
    padding-left: 12px;
}

.grid th:last-child {
    border-right: none;
}

.grid td {
    height: 26px;
    padding: 0 0 0 2px;
    background: #e4e1f6;
}

.grid td:first-child {
    padding: 0;
    border-right: 1px solid #8e8c9e;
}

.grid .level-1 td {
    background: #efedfb;
}

.grid .level-2 td {
    background: #f7f6fd;
}

.grid .selected td:nth-child(2) {
    background: var(--select);
}

.grid .filler td {
    height: 74px;
}

/* Splitters */
.splitter-h,
.splitter-v,
.splitter-s {
    display: flex;
    align-items: center;
    justify-content: center;
    gap: 4px;
    background: var(--bar);
}

.splitter-h {
    height: 9px;
    padding-left: 416px;
}

.splitter-v {
    flex-direction: column;
    width: 9px;
    padding-top: 86px;
}

.splitter-h i,
.splitter-v i {
    width: 5px;
    height: 5px;
    background: #9d9ba9;
}

.splitter-s {
    flex-direction: column;
    gap: 2px;
    width: 6px;
}

.splitter-s i {
    width: 2px;
    height: 2px;
    background: #9d9ba9;
}

/* Bottom half */
.bottom {
    flex: 1;
    display: grid;
    grid-template-columns: 559px 9px 1fr;
}

.codes {
    display: flex;
    flex-direction: column;
    padding: 9px 0 0 8px;
}

.head {
    height: 26px;
    margin: 12px 0 0;
    padding-left: 6px;
    border-right: 1px solid var(--border);
    border-bottom: 1px solid var(--border);
    background: linear-gradient(#dddce6, #cdccd9);
    font-size: 17px;
    font-weight: normal;
    line-height: 25px;
}

.tree {
    flex: 1;
    margin: 0;
    padding: 0;
    list-style: none;
    background: #f7f6fd;
}

.detail {
    display: flex;
    flex-direction: column;
    min-width: 0;
    padding: 12px 0 10px 6px;
}

.row {
    display: flex;
    height: 31px;
    margin-bottom: 3px;
}

.row label,
.caption {
    flex: none;
    width: 208px;
    padding-left: 2px;
    border-bottom: 1px solid #b4b4c2;
    line-height: 31px;
}

.row .inset {
    padding-left: 6px;
}

.row .uom {
    margin-left: 14px;
    padding-left: 2px;
}

.row input {
    height: 31px;
    padding: 0 0 2px 5px;
    border: 1px solid #a0a0ae;
    border-radius: 0;
    outline: none;
    background: #fff;
    font-family: var(--mono);
    font-size: 22px;
    color: #3c3c44;
}

.row input:read-only {
    background: #dfdff2;
}

.row .long {
    width: 402px;
}

.row .date {
    width: 142px;
}

.row .rest {
    flex: 1;
    min-width: 0;
    border-right: none;
}

.dash {
    width: 27px;
    line-height: 28px;
    text-align: center;
}

.texts {
    flex: 1;
    display: grid;
    grid-template-columns: 349px 6px 1fr;
}

.languages {
    display: flex;
    flex-direction: column;
}

.languages .tree {
    background: #efedfb;
}

.languages .level-1 {
    background: #f7f6fd;
}

.btn.clipped {
    justify-content: flex-start;
    width: 5px;
    overflow: hidden;
    border-right: none;
    border-radius: 3px 0 0 3px;
}

.more {
    align-self: center;
    width: 5px;
    height: 10px;
    margin-left: 3px;
    background: #101018;
    clip-path: polygon(0 0, 100% 50%, 0 100%);
}

.editor {
    display: flex;
    flex-direction: column;
}

.edit-toolbar {
    display: flex;
    gap: 10px;
    height: 35px;
    padding: 1px 1px 0;
}

.edit-toolbar div {
    display: flex;
    gap: 2px;
}

.edit-toolbar .btn {
    width: 29px;
}

.edit-toolbar .btn:disabled {
    opacity: 0.6;
}

.text-area {
    position: relative;
    flex: 1;
    display: flex;
    border: 3px double #33333b;
    border-width: 3px 0 2px 3px;
    background: #fff;
}

/* Red corner brackets of the text area */
.text-area::before,
.text-area::after {
    content: "";
    position: absolute;
    left: 1px;
    width: 8px;
    height: 8px;
    border-left: 2px solid #a3182c;
}

.text-area::before {
    top: 0;
    border-top: 2px solid #a3182c;
}

.text-area::after {
    bottom: 2px;
    border-bottom: 2px solid #a3182c;
}

.text-area textarea {
    flex: 1;
    padding: 0 0 0 9px;
    border: none;
    outline: none;
    resize: none;
    background: none;
    font-family: var(--mono);
    font-size: 22px;
    line-height: 24px;
    color: #3c3c44;
}

.status {
    display: flex;
    height: 31px;
    padding-right: 56px;
    justify-content: flex-end;
    background: #eee;
    line-height: 34px;
}

.status span {
    padding: 0 4px;
    border-left: 1px solid #d8d8de;
}
```
